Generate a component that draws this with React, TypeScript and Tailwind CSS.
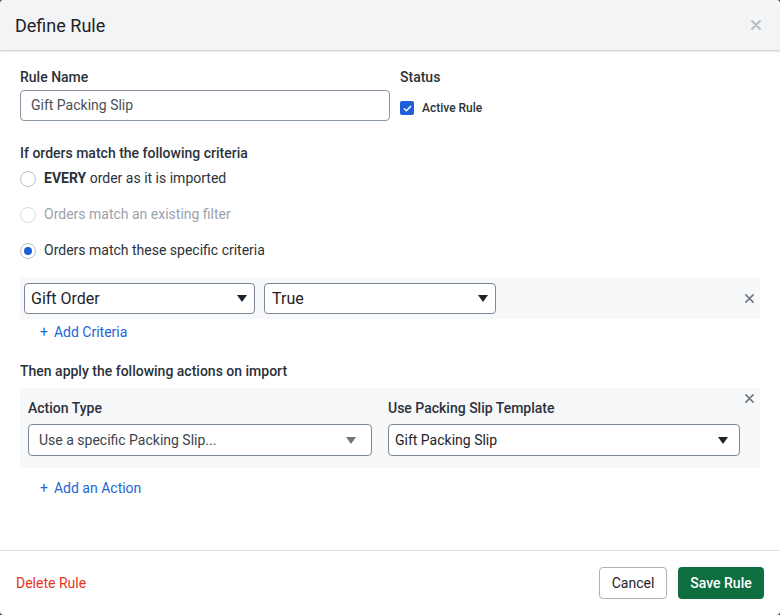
import React from "react";

// Small down-pointing caret used by the select boxes
const Caret = ({ className = "" }: { className?: string }) => (
  <svg width="10" height="7" viewBox="0 0 10 7" className={className}>
    <path d="M0 0 L10 0 L5 7 Z" fill="currentColor" />
  </svg>
);

const CloseX = ({ className = "", size = 10 }: { className?: string; size?: number }) => (
  <svg width={size} height={size} viewBox="0 0 10 10" className={className}>
    <path d="M1 1 L9 9 M9 1 L1 9" stroke="currentColor" strokeWidth="1.8" strokeLinecap="round" />
  </svg>
);

const Radio = ({ checked = false, muted = false }: { checked?: boolean; muted?: boolean }) => (
  <span
    className={`flex h-4 w-4 items-center justify-center rounded-full border bg-white ${
      muted ? "border-[#d5dae0]" : "border-[#b9c1ca]"
    }`}
  >
    {checked && <span className="h-2 w-2 rounded-full bg-[#1d5fd6]" />}
  </span>
);

const Select = ({
  value,
  className = "",
  textClass = "",
  caretClass = "",
}: {
  value: string;
  className?: string;
  textClass?: string;
  caretClass?: string;
}) => (
  <div
    className={`flex items-center justify-between rounded-[4px] border border-[#7b8794] bg-white ${className}`}
  >
    <span className={textClass}>{value}</span>
    <Caret className={caretClass} />
  </div>
);

const AddLink = ({ label, className = "" }: { label: string; className?: string }) => (
  <div className={`flex items-center pl-5 text-[14px] text-[#2466d6] ${className}`}>
    <span>+</span>
    <span className="ml-[6px]">{label}</span>
  </div>
);

export default function App() {
  return (
    <div className="h-[615px] w-[780px] bg-[#4a4a4a] font-['Roboto',sans-serif]">
      <div className="flex h-full w-full flex-col overflow-hidden rounded-[4px] bg-white">
        {/* Header */}
        <div className="relative z-10 flex h-[50px] shrink-0 items-center justify-between bg-[#f3f4f6] pl-[15px] pr-[19px] shadow-[0_1px_2px_rgba(0,0,0,0.25)]">
          <h1 className="text-[18px] text-[#1f2328]">Define Rule</h1>
          <CloseX className="mb-[1px] text-[#b4bcc5]" size={10} />
        </div>

        {/* Body */}
        <div className="flex-1 px-5 pt-[18px]">
          {/* Rule name + status */}
          <div className="flex gap-[10px]">
            <div className="w-[370px]">
              <div className="text-[14px] font-medium leading-[18px] text-[#2b323b]">Rule Name</div>
              <div className="mt-[4px] flex h-[31px] items-center rounded-[4px] border border-[#8a96a3] px-[10px] text-[14px] text-[#4b5159]">
                Gift Packing Slip
              </div>
            </div>
            <div>
              <div className="text-[14px] font-medium leading-[18px] text-[#2b323b]">Status</div>
              <div className="mt-[13px] flex items-center gap-2">
                <span className="flex h-[14px] w-[14px] items-center justify-center rounded-[2px] bg-[#1d5fd6]">
                  <svg width="9" height="7" viewBox="0 0 9 7">
                    <path d="M1 3.5 L3.4 5.8 L8 1" stroke="white" strokeWidth="1.4" fill="none" />
                  </svg>
                </span>
                <span className="text-[12px] font-medium text-[#2b323b]">Active Rule</span>
              </div>
            </div>
          </div>

          {/* Criteria */}
          <div className="mt-[23px] text-[14px] font-medium leading-[18px] text-[#2b323b]">
            If orders match the following criteria
          </div>
          <div className="mt-[6px] flex flex-col">
            <label className="flex h-[21px] items-center gap-[8px] text-[14px] text-[#2b323b]">
              <Radio />
              <span>
                <b className="font-bold">EVERY</b> order as it is imported
              </span>
            </label>
            <label className="mt-[15px] flex h-[21px] items-center gap-[8px] text-[14px] text-[#9aa3ad]">
              <Radio muted />
              <span>Orders match an existing filter</span>
            </label>
            <label className="mt-[15px] flex h-[21px] items-center gap-[8px] text-[14px] text-[#2b323b]">
              <Radio checked />
              <span>Orders match these specific criteria</span>
            </label>
          </div>

          <div className="mt-[17px] flex h-[41px] items-center gap-[9px] bg-[#f7f8fa] pl-1 pr-[6px]">
            <Select
              value="Gift Order"
              className="h-[31px] w-[231px] pl-[6px] pr-[7px]"
              textClass="text-[16px] text-[#1f2328]"
              caretClass="text-[#1f2328]"
            />
            <Select
              value="True"
              className="h-[31px] w-[232px] pl-[7px] pr-[7px]"
              textClass="text-[16px] text-[#1f2328]"
              caretClass="text-[#1f2328]"
            />
            <CloseX className="ml-auto text-[#6f7a86]" size={9} />
          </div>

          <AddLink label="Add Criteria" className="mt-[3px]" />

          {/* Actions */}
          <div className="mt-[19px] text-[14px] font-medium leading-[18px] text-[#2b323b]">
            Then apply the following actions on import
          </div>
          <div className="relative mt-[8px] flex h-[80px] gap-[16px] rounded-[3px] bg-[#f7f8fa] px-2 pt-[12px]">
            <div className="w-[344px]">
              <div className="text-[14px] font-medium leading-4 text-[#2b323b]">Action Type</div>
              <div className="mt-[8px]">
                <Select
                  value="Use a specific Packing Slip..."
                  className="h-[32px] w-full pl-[10px] pr-[15px]"
                  textClass="text-[14px] text-[#3d444c]"
                  caretClass="text-[#6b7480]"
                />
              </div>
            </div>
            <div className="w-[352px]">
              <div className="text-[14px] font-medium leading-4 text-[#2b323b]">Use Packing Slip Template</div>
              <div className="mt-[8px]">
                <Select
                  value="Gift Packing Slip"
                  className="h-[32px] w-full pl-[6px] pr-[11px]"
                  textClass="text-[14px] text-[#1f2328]"
                  caretClass="text-[#1f2328]"
                />
              </div>
            </div>
            <CloseX className="absolute right-[6px] top-[6px] text-[#6f7a86]" size={9} />
          </div>

          <AddLink label="Add an Action" className="mt-[10px]" />
        </div>

        {/* Footer */}
        <div className="flex h-[65px] shrink-0 items-center justify-between border-t border-[#dde2e7] pl-4 pr-4">
          <span className="text-[14px] text-[#e2341d]">Delete Rule</span>
          <div className="flex items-center gap-[11px]">
            <button className="h-[32px] w-[68px] rounded-[4px] border border-[#a9b1ba] bg-white text-[14px] text-[#1f2328]">
              Cancel
            </button>
            <button className="h-[32px] w-[86px] rounded-[4px] bg-[#0f6e40] text-[14px] font-medium text-white">
              Save Rule
            </button>
          </div>
        </div>
      </div>
    </div>
  );
}
